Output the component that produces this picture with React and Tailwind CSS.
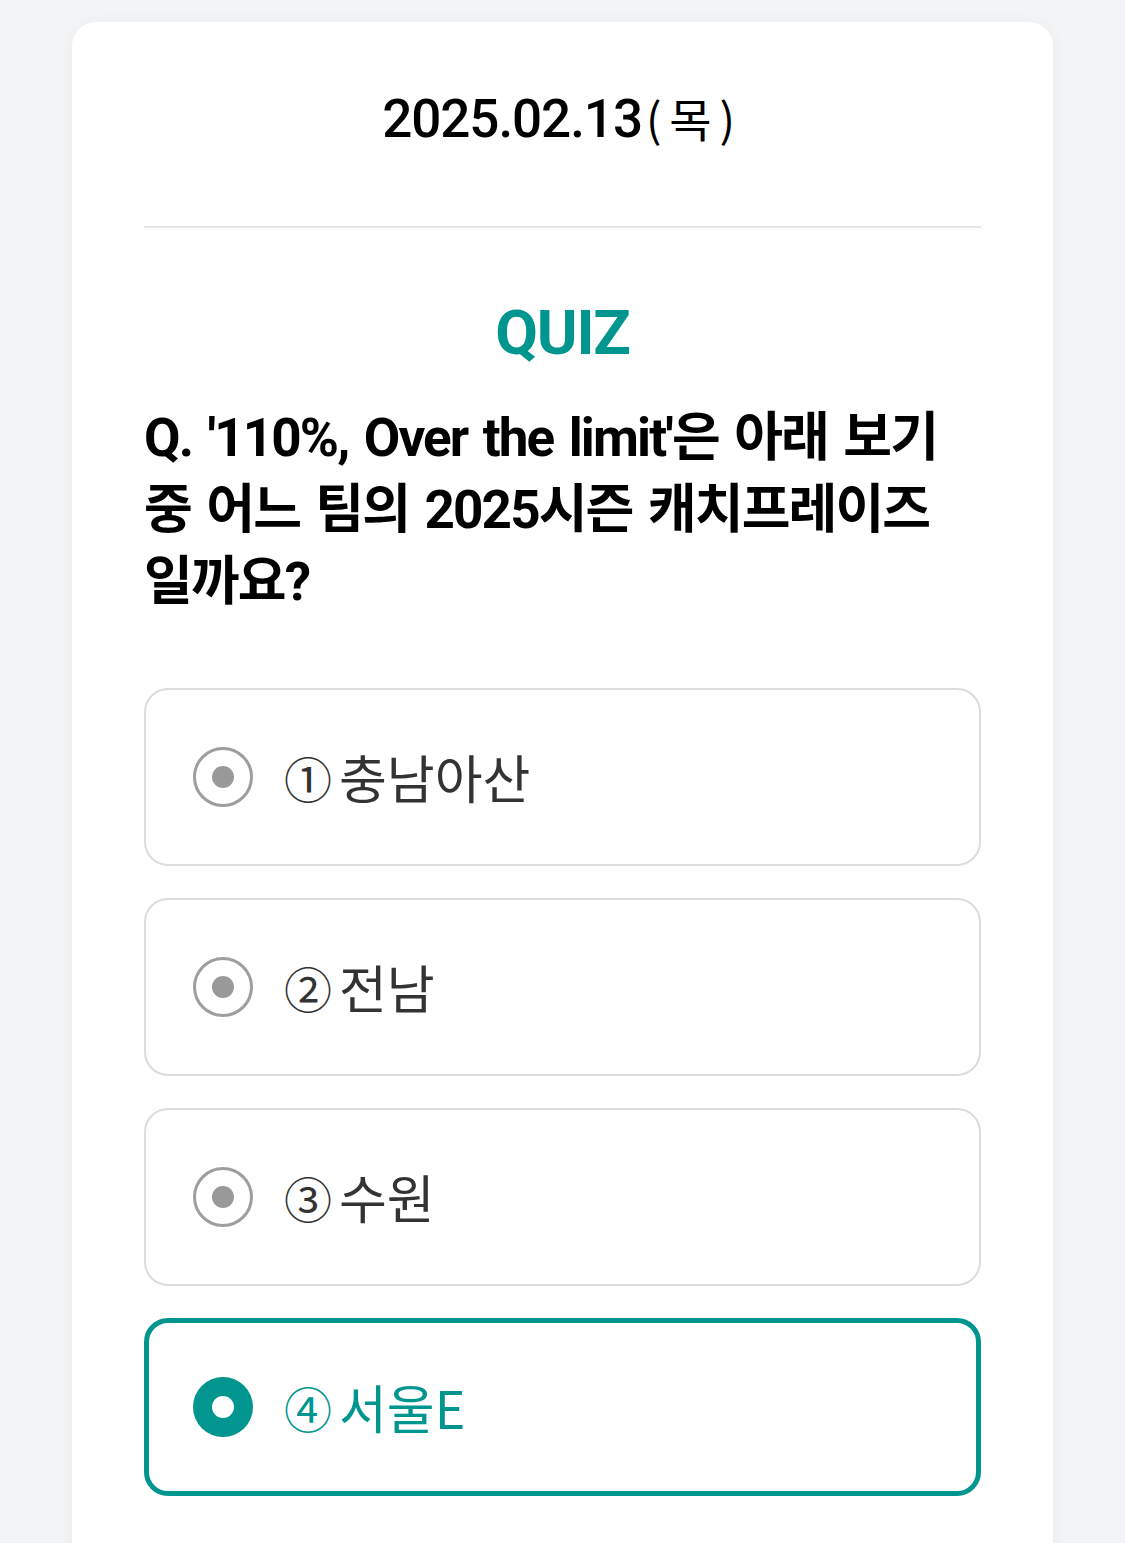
import React from "react";

const options = [
  { n: "①", label: "충남아산", selected: false },
  { n: "②", label: "전남", selected: false },
  { n: "③", label: "수원", selected: false },
  { n: "④", label: "서울E", selected: true },
];

function Radio({ selected }) {
  if (selected) {
    return (
      <div className="w-[60px] h-[60px] rounded-full bg-[#00968f] flex items-center justify-center shrink-0">
        <div className="w-[22px] h-[22px] rounded-full bg-white" />
      </div>
    );
  }
  return (
    <div className="w-[60px] h-[60px] rounded-full border-[3px] border-[#9e9e9e] flex items-center justify-center shrink-0">
      <div className="w-[22px] h-[22px] rounded-full bg-[#999999]" />
    </div>
  );
}

export default function App() {
  return (
    <div
      className="min-h-[1543px] bg-[#f3f4f6] pt-[22px] overflow-hidden"
      style={{ fontFamily: "Roboto, 'Noto Sans CJK KR', sans-serif" }}
    >
      <div className="mx-[72px] bg-white rounded-t-[24px] shadow-[0_0_16px_rgba(0,0,0,0.04)] px-[72px] pb-[60px] min-h-[1600px]">
        <div className="pt-[64px] text-center text-[53px] leading-[62px] font-medium text-black tracking-[-0.02em]">
          2025.02.13
          <span
            className="text-[46px] font-normal tracking-[0.17em] ml-[4px]"
            style={{ fontFamily: "'Noto Sans CJK KR', sans-serif" }}
          >
            (목)
          </span>
        </div>
        <div className="mt-[76px] h-[2px] bg-[#e6e6e6]" />
        <div className="mt-[65px] text-center text-[62px] leading-[79px] font-bold text-[#00968f] tracking-[-0.02em]">
          QUIZ
        </div>
        <div className="mt-[30px] text-[53px] leading-[72px] font-bold text-black tracking-[-0.035em] [word-spacing:4px] whitespace-nowrap">
          Q. '110%, Over the limit'은 아래 보기
          <br />
          중 어느 팀의 2025시즌 캐치프레이즈
          <br />
          일까요?
        </div>
        <div className="mt-[70px] flex flex-col gap-[32px]">
          {options.map((o) => (
            <div
              key={o.n}
              className={
                o.selected
                  ? "h-[178px] rounded-[24px] border-[5px] border-[#00968f] flex items-center pl-[44px] gap-[31px]"
                  : "h-[178px] rounded-[24px] border-[2px] border-[#dcdcdc] flex items-center pl-[47px] gap-[31px]"
              }
            >
              <Radio selected={o.selected} />
              <div
                className={
                  o.selected
                    ? "text-[52px] leading-[60px] text-[#00968f] flex items-center gap-[7px]"
                    : "text-[52px] leading-[60px] text-[#333333] flex items-center gap-[7px]"
                }
                style={{ fontFamily: "'Noto Sans CJK KR', sans-serif" }}
              >
                <span className="text-[48px]">{o.n}</span>
                <span>{o.label}</span>
              </div>
            </div>
          ))}
        </div>
      </div>
    </div>
  );
}
